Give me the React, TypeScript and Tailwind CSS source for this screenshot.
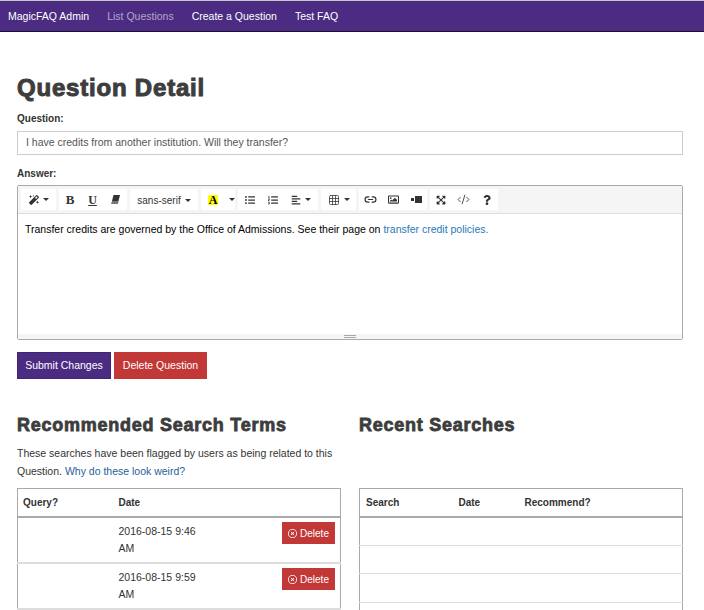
import React from "react";
import {
  FaAlignLeft,
  FaExpandArrowsAlt,
  FaListOl,
  FaListUl,
  FaMagic,
  FaQuestion,
  FaRegImage,
} from "react-icons/fa";
import { CodeXml, Grid3x3, Link2 } from "lucide-react";
import { FaRegCircleXmark } from "react-icons/fa6";

const Caret = () => (
  <span className="ml-1 inline-block h-0 w-0 border-x-[3px] border-t-[3px] border-x-transparent border-t-[#333]" />
);

const ToolBtn = ({ children, className = "" }: { children: React.ReactNode; className?: string }) => (
  <div className={`flex h-[21px] items-center justify-center text-[#333] ${className}`}>{children}</div>
);

const ToolGroup = ({ children }: { children: React.ReactNode }) => (
  <div className="flex h-[21px] items-center bg-white">{children}</div>
);

const Heading = ({ children }: { children: React.ReactNode }) => (
  <h2 className="text-[18px] leading-[24px] font-bold tracking-[0.75px] text-[#3d3d3d] [-webkit-text-stroke:0.8px_#3d3d3d]">
    {children}
  </h2>
);

const App: React.FC = () => {
  return (
    <div className="h-[610px] overflow-hidden bg-white font-['Liberation_Sans',Arial,sans-serif] text-[10.5px] text-[#333]">
      <nav className="flex h-8 items-center gap-[18px] border-t border-b border-t-[#c8c8c8] border-b-[#1c0f33] bg-[#4b2c82] pt-[1px] pl-2 text-white">
        <span>MagicFAQ Admin</span>
        <span className="text-[#b3a6c9]">List Questions</span>
        <span>Create a Question</span>
        <span>Test FAQ</span>
      </nav>

      <main className="pr-[21px] pl-[17px]">
        <h1 className="mt-[42px] text-[24px] leading-[28px] font-bold tracking-[0.8px] text-[#3d3d3d] [-webkit-text-stroke:1px_#3d3d3d]">
          Question Detail
        </h1>

        <label className="mt-[10px] block text-[10px] leading-[14px] font-bold">Question:</label>
        <div className="mt-[5px] flex h-6 items-center border border-[#ccc] px-2 text-[#555]">
          I have credits from another institution. Will they transfer?
        </div>

        <label className="mt-[11px] block pt-[1px] text-[10px] leading-[13px] font-bold">Answer:</label>
        <div className="mt-[5px] h-[155px] rounded-[2px] border border-[#a9a9a9]">
          <div className="flex h-[28px] items-center gap-[3px] border-b border-[#ddd] bg-[#f5f5f5] pl-[3px]">
            <ToolGroup>
              <ToolBtn className="w-[35px]">
                <FaMagic size={10} />
                <Caret />
              </ToolBtn>
            </ToolGroup>
            <ToolGroup>
              <ToolBtn className="w-[22px] pt-[1px] font-['Liberation_Serif',serif] text-[13px] font-bold">B</ToolBtn>
              <ToolBtn className="w-[23px] pt-[1px] font-['Liberation_Serif',serif] text-[12px] font-bold underline">U</ToolBtn>
              <ToolBtn className="w-[23px]">
                <svg width="9" height="9" viewBox="0 0 9 9">
                  <path d="M2.500 0H9L7.500 6H1z" fill="#333" />
                  <path d="M1 6h6.500L7 9H0z" fill="#777" />
                </svg>
              </ToolBtn>
            </ToolGroup>
            <ToolGroup>
              <ToolBtn className="w-[68px] pt-[1px] text-[10px]">
                sans-serif
                <Caret />
              </ToolBtn>
            </ToolGroup>
            <ToolGroup>
              <ToolBtn className="w-[24px] pt-[1px]">
                <span className="flex h-[10px] w-[10px] items-center justify-center bg-[#ffff00] font-['Liberation_Serif',serif] text-[12px] font-bold text-black">
                  A
                </span>
              </ToolBtn>
              <ToolBtn className="w-[10px]"><Caret /></ToolBtn>
            </ToolGroup>
            <ToolGroup>
              <ToolBtn className="w-[23px]"><FaListUl size={10} /></ToolBtn>
              <ToolBtn className="w-[23px]"><FaListOl size={10} /></ToolBtn>
              <ToolBtn className="w-[34px]">
                <FaAlignLeft size={10} />
                <Caret />
              </ToolBtn>
            </ToolGroup>
            <ToolGroup>
              <ToolBtn className="w-[35px]">
                <Grid3x3 size={12} strokeWidth={1.5} />
                <Caret />
              </ToolBtn>
            </ToolGroup>
            <ToolGroup>
              <ToolBtn className="w-[23px]"><Link2 size={13} strokeWidth={2.2} /></ToolBtn>
              <ToolBtn className="w-[23px]"><FaRegImage size={11} /></ToolBtn>
              <ToolBtn className="w-[22px]">
                <svg width="11" height="7" viewBox="0 0 11 7">
                  <path d="M4 0h7v7H4zM0 2h3v3H0z" fill="#333" />
                </svg>
              </ToolBtn>
            </ToolGroup>
            <ToolGroup>
              <ToolBtn className="w-[22px]"><FaExpandArrowsAlt size={10} /></ToolBtn>
              <ToolBtn className="w-[23px]"><CodeXml size={13} strokeWidth={1.6} /></ToolBtn>
              <ToolBtn className="w-[23px]"><FaQuestion size={10} /></ToolBtn>
            </ToolGroup>
          </div>
          <div className="h-[120px] px-[7px] pt-[8px] leading-[14px] text-black">
            Transfer credits are governed by the Office of Admissions. See their page on{" "}
            <span className="text-[#1f7ab8]">transfer credit policies.</span>
          </div>
          <div className="flex h-[5px] flex-col items-center justify-center gap-[1px] bg-[#f5f5f5]">
            <span className="h-px w-[12px] bg-[#a9a9a9]" />
            <span className="h-px w-[12px] bg-[#a9a9a9]" />
          </div>
        </div>

        <div className="mt-3 flex gap-[3px] text-white">
          <button className="h-[27px] w-[94px] border border-[#3f2470] bg-[#4b2c82] pt-[1px]">Submit Changes</button>
          <button className="h-[27px] w-[93px] bg-[#c13836] pt-[1px]">Delete Question</button>
        </div>

        <div className="mt-[34px] grid grid-cols-2 gap-x-[18px]">
          <section>
            <Heading>Recommended Search Terms</Heading>
            <p className="mt-[7px] leading-[18px]">
              These searches have been flagged by users as being related to this Question.{" "}
              <span className="text-[#1f5f99]">Why do these look weird?</span>
            </p>
            <table className="mt-[8px] w-full table-fixed border-x border-t border-[#aaa]">
              <thead>
                <tr className="h-[28px] border-b-2 border-[#aaa] text-left text-[10px]">
                  <th className="w-[101px] pt-[1px] pl-[5px]">Query?</th>
                  <th className="pt-[1px]">Date</th>
                  <th className="w-[80px]" />
                </tr>
              </thead>
              <tbody>
                {["2016-08-15 9:46 AM", "2016-08-15 9:59 AM"].map((d) => (
                  <tr key={d} className="h-[46px] border-b-2 border-[#ddd]">
                    <td />
                    <td className="pt-[5px] align-top leading-[17px]">
                      <div className="w-[90px]">{d}</div>
                    </td>
                    <td className="pt-[4px] pr-[5px] text-right align-top">
                      <span className="inline-flex h-[22px] w-[53px] items-center justify-center gap-[3px] bg-[#c13836] pt-[1px] text-[10px] text-white">
                        <FaRegCircleXmark size={9} />
                        Delete
                      </span>
                    </td>
                  </tr>
                ))}
              </tbody>
            </table>
          </section>

          <section>
            <Heading>Recent Searches</Heading>
            <table className="mt-[51px] w-full table-fixed border-x border-t border-[#aaa]">
              <thead>
                <tr className="h-[28px] border-b-2 border-[#aaa] text-left text-[10px]">
                  <th className="w-[99px] pt-[1px] pl-[6px]">Search</th>
                  <th className="w-[66px] pt-[1px]">Date</th>
                  <th className="pt-[1px]">Recommend?</th>
                </tr>
              </thead>
              <tbody>
                <tr className="h-[29px] border-b border-[#ddd]"><td /><td /><td /></tr>
                <tr className="h-[28px] border-b border-[#ddd]"><td /><td /><td /></tr>
                <tr className="h-[29px] border-b border-[#ddd]"><td /><td /><td /></tr>
                <tr className="h-[28px] border-b border-[#ddd]"><td /><td /><td /></tr>
              </tbody>
            </table>
          </section>
        </div>
      </main>
    </div>
  );
};

export default App;
